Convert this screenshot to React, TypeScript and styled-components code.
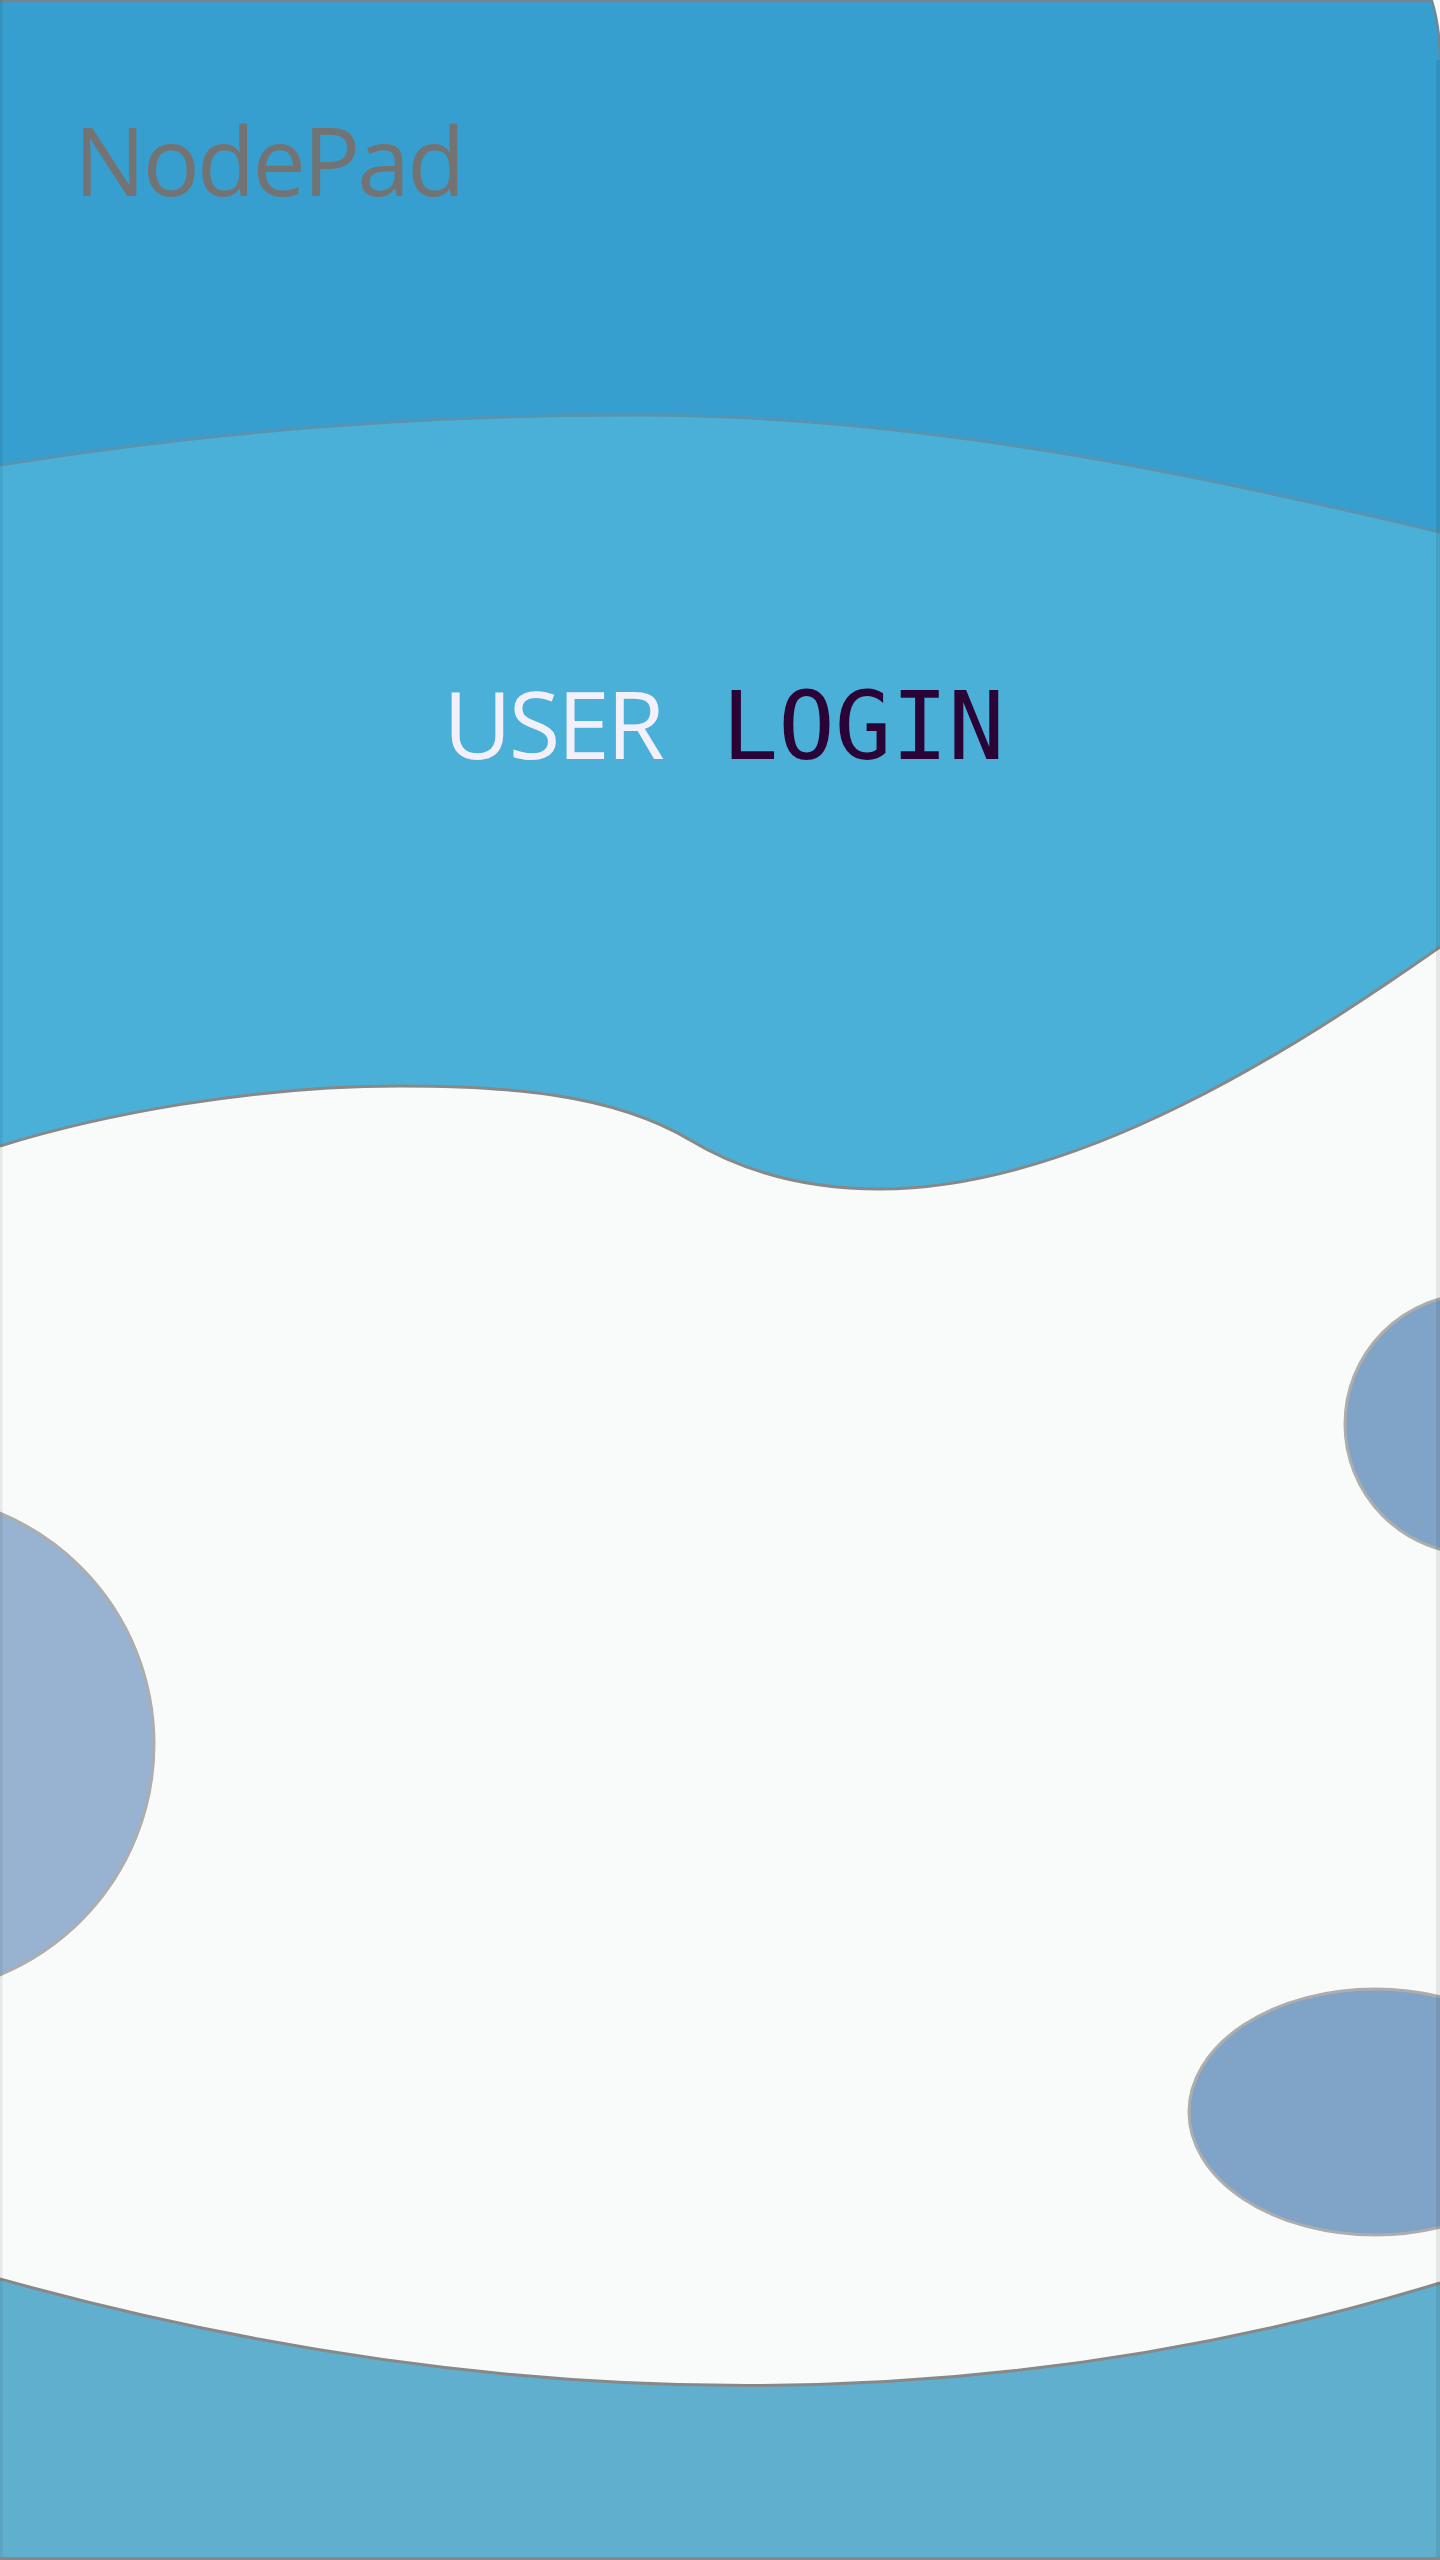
import React from "react";
import styled, { createGlobalStyle } from "styled-components";

const GlobalStyle = createGlobalStyle`
  html, body {
    margin: 0;
    padding: 0;
    background: #f9fbfb;
  }
  * { box-sizing: border-box; }
`;

const Page = styled.main`
  position: relative;
  width: 1440px;
  height: 2560px;
  overflow: hidden;
  background: #f9fbfb;
  font-family: "Open Sans", "Noto Sans", sans-serif;
`;

const Backdrop = styled.svg`
  position: absolute;
  inset: 0;
  z-index: 0;
  display: block;
`;

const Content = styled.div`
  position: relative;
  z-index: 1;
  display: flex;
  flex-direction: column;
`;

const Header = styled.header`
  padding: 112px 0 0 74px;
`;

const Brand = styled.h1`
  margin: 0;
  font-family: "Open Sans", "Noto Sans", sans-serif;
  font-weight: 400;
  font-size: 95px;
  line-height: 1;
  letter-spacing: -2.8px;
  color: #737373;
`;

const TitleRow = styled.h2`
  margin: 469px 0 0;
  padding-left: 8px;
  display: flex;
  justify-content: center;
  align-items: baseline;
  gap: 60px;
  font-weight: 400;
  line-height: 1;
`;

const Word = styled.span<{ $mono?: boolean }>`
  font-family: ${(p) =>
    p.$mono
      ? `"DejaVu Sans Mono", "Liberation Mono", monospace`
      : `"Open Sans", "Noto Sans", sans-serif`};
  font-size: 94px;
  letter-spacing: ${(p) => (p.$mono ? "0" : "-3px")};
  color: ${(p) => (p.$mono ? "#2a0437" : "#f4f0fb")};
`;

const blobTop =
  "M0,465 C230,428 450,414 650,415 C920,417 1180,470 1440,532";
const blobBottom =
  "M1440,947 C1300,1045 1080,1189 880,1189 C800,1189 740,1170 690,1140 C610,1092 500,1086 400,1086 C250,1086 100,1115 0,1146";
const blobFill =
  "M0,465 C230,428 450,414 650,415 C920,417 1180,470 1440,532 L1440,947 C1300,1045 1080,1189 880,1189 C800,1189 740,1170 690,1140 C610,1092 500,1086 400,1086 C250,1086 100,1115 0,1146 Z";
const footWave = "M0,2279 Q760,2490 1440,2283";

function Waves() {
  return (
    <Backdrop
      width="1440"
      height="2560"
      viewBox="0 0 1440 2560"
      aria-hidden="true"
    >
      <path
        d="M0,0 H1432 C1436,14 1440,34 1440,60 V700 H0 Z"
        fill="#379fd0"
      />
      <path
        d="M0,1 H1432 C1436,14 1440,34 1440,60"
        fill="none"
        stroke="#73858f"
        strokeWidth="2.5"
      />
      <path d={blobFill} fill="#4ab0d8" />
      <path d={blobTop} fill="none" stroke="#5893b0" strokeWidth="3" />
      <path d={blobBottom} fill="none" stroke="#888888" strokeWidth="3" />

      <circle cx="-96" cy="1744" r="250" fill="#97b3d1" stroke="#adadad" strokeWidth="3" />
      <circle cx="1475" cy="1424" r="130" fill="#80a3c8" stroke="#adadad" strokeWidth="3" />
      <ellipse cx="1375" cy="2112" rx="186" ry="123" fill="#80a3c8" stroke="#adadad" strokeWidth="3" />

      <path d={`${footWave} V2560 H0 Z`} fill="#60afcf" />
      <path d={footWave} fill="none" stroke="#888888" strokeWidth="3" />

      <rect x="0" y="0" width="2.5" height="2560" fill="rgba(0,0,0,0.07)" />
      <rect x="1436" y="60" width="4" height="2500" fill="rgba(0,0,0,0.08)" />
      <rect x="0" y="2557" width="1440" height="3" fill="#888888" />
    </Backdrop>
  );
}

export default function App() {
  return (
    <>
      <GlobalStyle />
      <Page>
        <Waves />
        <Content>
          <Header>
            <Brand>NodePad</Brand>
          </Header>
          <TitleRow>
            <Word>USER</Word>
            <Word $mono>LOGIN</Word>
          </TitleRow>
        </Content>
      </Page>
    </>
  );
}
